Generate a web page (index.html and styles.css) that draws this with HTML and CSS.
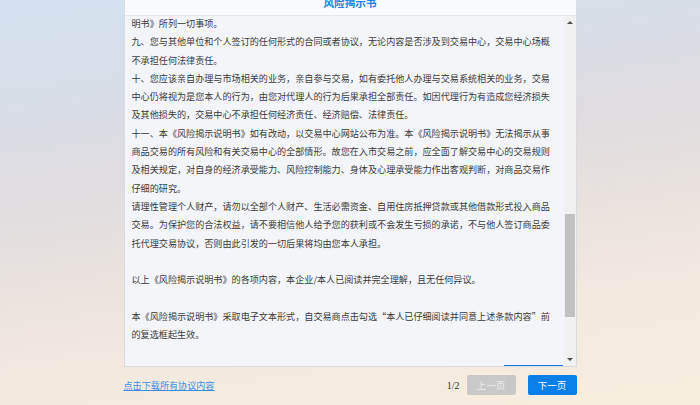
FILE: index.html
```html
<!DOCTYPE html>
<html lang="zh-CN">
<head>
<meta charset="utf-8">
<title>风险揭示书</title>
<link rel="stylesheet" href="styles.css">
</head>
<body>
<div class="page">
  <div class="dialog">
    <div class="dlg-head"><h1 class="dlg-title">风险揭示书</h1></div>
    <div class="dlg-body">
      <div class="scroll-text">
        <div class="doc">
          <p>明书》所列一切事项。</p>
          <p>九、您与其他单位和个人签订的任何形式的合同或者协议，无论内容是否涉及到交易中心，交易中心场概不承担任何法律责任。</p>
          <p>十、您应该亲自办理与市场相关的业务，亲自参与交易，如有委托他人办理与交易系统相关的业务，交易中心仍将视为是您本人的行为，由您对代理人的行为后果承担全部责任。如因代理行为有造成您经济损失及其他损失的，交易中心不承担任何经济责任、经济赔偿、法律责任。</p>
          <p>十一、本《风险揭示说明书》如有改动，以交易中心网站公布为准。本《风险揭示说明书》无法揭示从事商品交易的所有风险和有关交易中心的全部情形。故您在入市交易之前，应全面了解交易中心的交易规则及相关规定，对自身的经济承受能力、风险控制能力、身体及心理承受能力作出客观判断，对商品交易作仔细的研究。</p>
          <p>请理性管理个人财产，请勿以全部个人财产、生活必需资金、自用住房抵押贷款或其他借款形式投入商品交易。为保护您的合法权益，请不要相信他人给予您的获利或不会发生亏损的承诺，不与他人签订商品委托代理交易协议，否则由此引发的一切后果将均由您本人承担。</p>
          <p class="gap">以上《风险揭示说明书》的各项内容，本企业/本人已阅读并完全理解，且无任何异议。</p>
          <p>本《风险揭示说明书》采取电子文本形式，自交易商点击勾选“本人已仔细阅读并同意上述条款内容”前的复选框起生效。</p>
        </div>
        <div class="peek-bar"></div>
      </div>
      <div class="scrollbar">
        <span class="arrow arrow-up"></span>
        <div class="track"><div class="thumb" style="margin-top:190px;height:103px"></div></div>
        <span class="arrow arrow-down"></span>
      </div>
    </div>
  </div>
  <div class="footer">
    <a class="download" href="#">点击下载所有协议内容</a>
    <div class="pager">
      <span class="page-num">1/2</span>
      <button class="btn btn-disabled" type="button">上一页</button>
      <button class="btn btn-primary" type="button">下一页</button>
    </div>
  </div>
</div>
</body>
</html>
```

FILE: styles.css
```css
html, body {
  margin: 0;
  padding: 0;
}
body {
  width: 700px;
  height: 405px;
  overflow: hidden;
  background: linear-gradient(172deg, #d3e2f0 0%, #d8dde6 22%, #dfdce0 38%, #e9e2de 58%, #f3eadf 78%, #f8efe0 100%);
  font-family: "Noto Sans CJK SC", "Noto Sans", sans-serif;
  color: #333;
}
.page {
  display: flex;
  flex-direction: column;
  align-items: center;
}
.dialog {
  width: 451px;
  border: 1px solid #d9dbe0;
  border-top: 0;
  background: #f4f5f9;
}
.dlg-head {
  height: 15px;
  overflow: hidden;
  background: #f9fafc;
  border-bottom: 1px solid #e6e8ee;
}
.dlg-title {
  margin: -3px 0 0;
  font-size: 10.6px;
  line-height: 12px;
  font-weight: 700;
  color: #1c7fe6;
  text-align: center;
}
.dlg-body {
  display: flex;
  height: 350px;
}
.scroll-text {
  flex: 1;
  overflow: hidden;
  padding-left: 7px;
  display: flex;
  flex-direction: column;
}
.doc {
  width: 421px;
  margin-top: -2px;
  font-size: 9.1px;
  line-height: 18.3px;
  color: #3a3a3a;
  flex: none;
}
.doc p {
  margin: 0;
}
.doc p.gap {
  margin: 18.3px 0;
}
.peek-bar {
  align-self: flex-end;
  width: 59px;
  height: 2px;
  margin-top: 22px;
  margin-right: 1px;
  background: #1a7be6;
  flex: none;
}
.scrollbar {
  width: 12px;
  background: #f1f1f1;
  display: flex;
  flex-direction: column;
  align-items: center;
}
.arrow {
  width: 0;
  height: 0;
  border-left: 3px solid transparent;
  border-right: 3px solid transparent;
  flex: none;
}
.arrow-up {
  margin-top: 5px;
  border-bottom: 3px solid #505050;
}
.arrow-down {
  margin-bottom: 5px;
  border-top: 3px solid #505050;
}
.track {
  flex: 1;
  width: 12px;
}
.thumb {
  width: 10px;
  margin-left: 1px;
  background: #c1c1c1;
}
.footer {
  width: 453px;
  margin-top: 8px;
  display: flex;
  align-items: center;
  justify-content: space-between;
}
.download {
  font-size: 9.1px;
  line-height: 14px;
  color: #3d8fe6;
  text-decoration: underline;
}
.pager {
  display: flex;
  align-items: center;
}
.page-num {
  font-family: "Liberation Serif", serif;
  font-size: 10px;
  color: #333;
  margin-right: 7px;
}
.btn {
  width: 49px;
  height: 20px;
  border: 0;
  border-radius: 2px;
  padding: 0;
  font-family: "Noto Sans CJK SC", sans-serif;
  font-size: 9.5px;
  line-height: 20px;
}
.btn-disabled {
  background: #c9c9c9;
  color: #ececec;
}
.btn-primary {
  margin-left: 12px;
  background: #0b7fe8;
  color: #fff;
}
```
